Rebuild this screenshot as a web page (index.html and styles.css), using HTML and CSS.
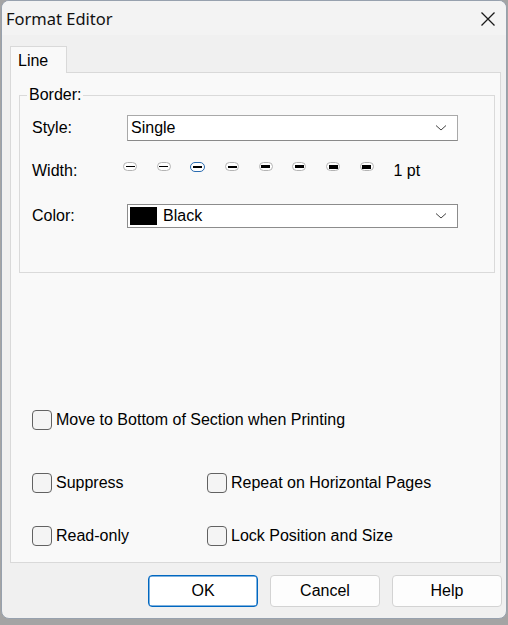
FILE: index.html
```html
<!DOCTYPE html>
<html>
<head>
<meta charset="utf-8">
<link rel="stylesheet" href="styles.css">
</head>
<body>
<div class="window">
  <div class="titlebar">
    <span class="title">Format Editor</span>
    <svg class="close" width="16" height="16" viewBox="0 0 16 16"><path d="M1.5 1.5 L14.5 14.5 M14.5 1.5 L1.5 14.5" stroke="#1a1a1a" stroke-width="1.3" fill="none"/></svg>
  </div>
  <div class="content">
    <div class="tabs"><div class="tab">Line</div></div>
    <div class="panel">
      <fieldset class="group">
        <legend>Border:</legend>
        <div class="row row-style">
          <span class="label">Style:</span>
          <div class="select">
            <span class="value">Single</span>
            <svg class="chev" width="12" height="8" viewBox="0 0 12 8"><path d="M1 1.5 L6 6 L11 1.5" stroke="#444" stroke-width="1" fill="none"/></svg>
          </div>
        </div>
        <div class="row row-width">
          <span class="label">Width:</span>
          <div class="widths">
            <span class="pill"><span class="bar w1"></span></span>
            <span class="pill"><span class="bar w1"></span></span>
            <span class="pill sel"><span class="bar w2"></span></span>
            <span class="pill"><span class="bar w2"></span></span>
            <span class="pill"><span class="bar w3"></span></span>
            <span class="pill"><span class="bar w3"></span></span>
            <span class="pill"><span class="bar w4"></span></span>
            <span class="pill"><span class="bar w4"></span></span>
            <span class="pt">1 pt</span>
          </div>
        </div>
        <div class="row row-color">
          <span class="label">Color:</span>
          <div class="select select-color">
            <span class="swatch"></span>
            <span class="value">Black</span>
            <svg class="chev" width="12" height="8" viewBox="0 0 12 8"><path d="M1 1.5 L6 6 L11 1.5" stroke="#444" stroke-width="1" fill="none"/></svg>
          </div>
        </div>
      </fieldset>
      <div class="checks">
        <label class="check c-move"><span class="box"></span>Move to Bottom of Section when Printing</label>
        <div class="check-row r1">
          <label class="check col1"><span class="box"></span>Suppress</label>
          <label class="check"><span class="box"></span>Repeat on Horizontal Pages</label>
        </div>
        <div class="check-row r2">
          <label class="check col1"><span class="box"></span>Read-only</label>
          <label class="check"><span class="box"></span>Lock Position and Size</label>
        </div>
      </div>
    </div>
    <div class="footer">
      <button class="btn default">OK</button>
      <button class="btn">Cancel</button>
      <button class="btn">Help</button>
    </div>
  </div>
</div>
</body>
</html>
```
FILE: styles.css
```css
html, body {
  margin: 0;
  padding: 0;
  background: #a4a4a4;
  width: 508px;
  height: 625px;
  overflow: hidden;
}
body {
  font-family: "Liberation Sans", Arial, sans-serif;
  font-size: 16px;
  color: #000;
}
.window {
  box-sizing: border-box;
  margin-left: 1px;
  width: 506px;
  height: 619px;
  border: 1px solid #97a1ae;
  border-radius: 8px;
  background: #f0f0f0;
  overflow: hidden;
  display: flex;
  flex-direction: column;
}
.titlebar {
  height: 34px;
  background: #f3f3f3;
  display: flex;
  align-items: center;
  justify-content: space-between;
  padding: 0 10px 0 4px;
  flex: none;
}
.title {
  font-family: "Noto Sans", "Open Sans", sans-serif;
  font-size: 16.5px;
  color: #111;
  margin-top: 1px;
}
.close {
  display: block;
  margin-top: 1px;
}
.content {
  flex: 1;
  padding: 11px 5px 0 8px;
  display: flex;
  flex-direction: column;
}
.tabs {
  display: flex;
  position: relative;
  z-index: 1;
  margin-bottom: -1px;
}
.tab {
  box-sizing: border-box;
  width: 57px;
  height: 27px;
  border: 1px solid #d9d9d9;
  border-bottom: none;
  background: #f9f9f9;
  padding: 5px 0 0 7px;
  line-height: 18px;
}
.panel {
  box-sizing: border-box;
  width: 491px;
  height: 491px;
  border: 1px solid #d9d9d9;
  background: #f9f9f9;
  display: flex;
  flex-direction: column;
}
.group {
  box-sizing: border-box;
  margin: 13px 0 0 8px;
  width: 476px;
  padding: 11px 0 44px 12px;
  border: 1px solid #dadada;
  min-width: 0;
}
.group legend {
  padding: 0 2px;
  margin-left: -5px;
  line-height: 18px;
}
.row {
  display: flex;
  align-items: center;
}
.label {
  width: 95px;
  flex: none;
}
.row-style { height: 26px; }
.row-width { height: 24px; margin-top: 18px; }
.row-color { height: 24px; margin-top: 21px; }
.select {
  box-sizing: border-box;
  width: 331px;
  height: 26px;
  background: #fff;
  border: 1px solid #a9a9a9;
  border-bottom-color: #8a8a8a;
  display: flex;
  align-items: center;
  padding: 0 10px 0 3px;
}
.select .value { flex: 1; }
.select-color {
  height: 24px;
  padding-left: 2px;
  border-color: #8c8c8c;
}
.swatch {
  width: 27px;
  height: 18px;
  background: #000;
  margin-right: 6px;
  flex: none;
}
.chev { display: block; }
.widths {
  display: flex;
  align-items: center;
  margin-left: -4px;
  gap: 19.7px;
}
.pill {
  box-sizing: border-box;
  width: 14px;
  height: 9px;
  border: 1px solid #b4b4b4;
  border-radius: 5px;
  background: #fff;
  display: flex;
  align-items: center;
  justify-content: center;
  margin-top: -9px;
}
.pill.sel {
  border: 1.5px solid #2b6cb0;
  width: 15px;
  height: 10px;
}
.bar {
  display: block;
  width: 9px;
  background: #000;
}
.w1 { height: 1px; }
.w2 { height: 2px; }
.w3 { height: 3px; }
.w4 { height: 4px; }
.checks {
  padding-left: 21px;
  margin-top: 137px;
  display: flex;
  flex-direction: column;
}
.check {
  display: flex;
  align-items: center;
  height: 20px;
}
.box {
  box-sizing: border-box;
  width: 20px;
  height: 20px;
  border: 1px solid #626262;
  border-radius: 4px;
  background: #f4f4f4;
  margin-right: 4px;
  flex: none;
}
.check-row {
  display: flex;
}
.check-row.r1 { margin-top: 43px; }
.check-row.r2 { margin-top: 33px; }
.col1 { width: 175px; }
.footer {
  display: flex;
  justify-content: flex-end;
  gap: 12px;
  margin-top: 12px;
  margin-right: -1px;
}
.btn {
  box-sizing: border-box;
  width: 110px;
  height: 32px;
  border: 1px solid #d3d3d3;
  border-radius: 4px;
  background: #fdfdfd;
  font-family: "Liberation Sans", Arial, sans-serif;
  font-size: 16px;
  color: #000;
  padding: 0;
}
.btn.default {
  border: 1px solid #0067c0;
  box-shadow: inset 0 0 0 0.5px #0067c0;
  background: #fff;
}
```
